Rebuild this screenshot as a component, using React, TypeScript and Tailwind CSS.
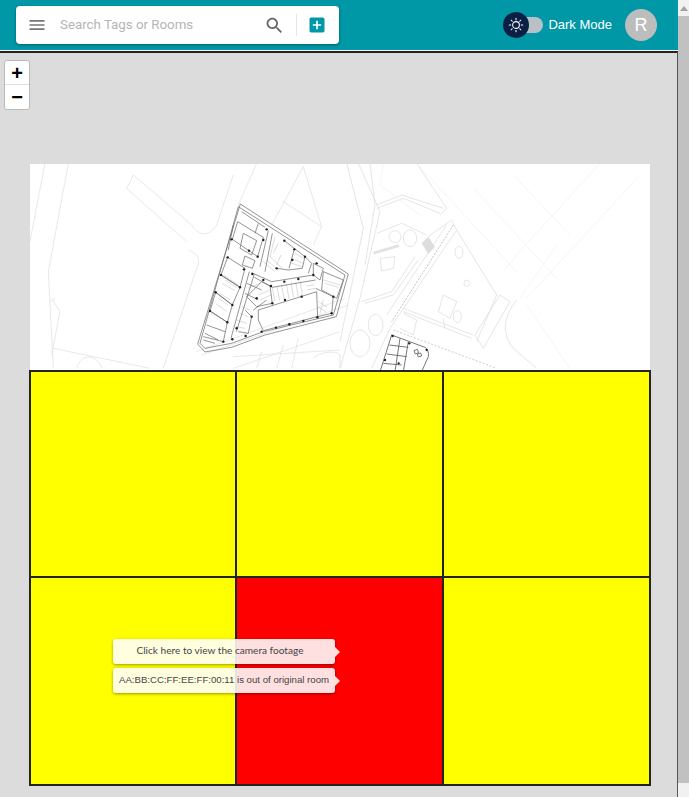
// wall lines of the main building (coordinates: 3x crop, offset 195,200)
const buildingWalls = [
  "M130 20 L450 225 L415 345 L205 395 L110 430 L30 445 L15 430 L130 20 Z",
  "M136 12 L460 222 L424 350 L210 405 L110 442 L30 456 L8 432 Z",
  "M163 215 L108 415 M178 222 L124 395",
  "M170 218 L230 245 L355 225 M178 232 L232 262 L362 240",
  "M190 330 L365 275 L368 350 L205 392 L190 360 Z",
  "M220 92 L195 200 M232 100 L210 215",
  "M128 65 L205 112 L188 170 L112 118 Z",
  "M98 172 L150 205 L135 262 L78 225 Z",
  "M145 100 L185 122 L170 165 L135 145 Z",
  "M150 168 L180 182 L172 205 L142 195 Z",
  "M115 75 L100 150 M140 35 L210 82 M190 70 L180 100",
  "M62 277 L112 315 L97 367 L45 333 Z",
  "M78 225 L135 262 L112 315 L62 277",
  "M45 333 L97 367 L85 425 L25 410",
  "M35 375 L90 395 M25 420 L60 430 M30 400 L70 420",
  "M355 190 L385 205 L375 240 L355 225 Z",
  "M385 215 L445 240 L425 295 L380 270 Z",
  "M362 265 L415 290 L410 340 L368 350",
  "M268 122 L330 170 L322 205 L280 210 L245 205",
  "M298 148 L282 205 M330 170 L350 190 L340 220",
  "M150 330 L170 350 L160 400 L130 395",
  "M200 245 L225 258 L232 310 L185 320 L155 290 Z",
  "M155 250 L200 270 M150 280 L190 300 M175 330 L215 300",
]

const buildingHatch = [
  "M232 262 L240 305 M246 258 L254 302 M260 255 L268 298 M274 252 L282 296 M288 248 L296 293 M302 246 L310 290 M316 244 L322 286 M336 258 L358 254 M335 270 L360 265",
  "M205 185 L240 215 M215 180 L250 210 M225 170 L262 205 M240 110 L225 170 M250 130 L235 160 M258 165 L245 195",
  "M288 175 L325 190 M285 188 L322 200 M300 160 L330 178",
  "M85 225 L130 255 M90 240 L125 262 M82 250 L120 272 M75 280 L105 300 M70 295 L100 315 M62 310 L95 335",
  "M140 320 L165 330 M135 340 L160 350 M125 360 L155 370 M122 380 L150 385",
  "M370 305 L395 320 M368 320 L392 335 M375 340 L385 300 M390 250 L430 262 M385 240 L435 255",
  "M190 285 L225 270 M195 300 L228 285 M160 265 L195 250",
]

const buildingColumns = [
  [215, 88], [268, 122], [298, 148], [330, 170], [365, 190], [205, 120], [110, 118], [162, 152],
  [98, 172], [188, 170], [147, 208], [172, 222], [205, 240], [268, 245], [310, 237], [355, 225],
  [228, 258], [270, 300], [232, 310], [185, 295], [170, 350], [78, 225], [62, 277], [135, 262],
  [112, 315], [45, 333], [97, 367], [125, 385], [112, 418], [85, 425], [152, 408], [200, 395],
  [243, 383], [283, 373], [325, 363], [367, 352], [410, 340], [415, 290], [320, 290], [292, 180],
  [245, 205],
]

// site lines left of the middle (3x crop, offset 20,155)
const siteLeft = [
  "M75 25 L30 260",
  "M145 25 L85 350 L100 640",
  "M340 60 L320 100 L500 260 M340 60 L515 210",
  "M515 210 C535 245 570 245 590 210 L640 60",
  "M505 285 C540 300 540 320 530 340 L430 640",
  "M95 430 L120 470 L95 600 M105 430 L90 440",
  "M100 580 L390 640",
  "M170 640 C185 590 235 600 245 640",
  "M710 25 L655 150 M850 35 L905 215 L880 270 M850 35 L755 210",
  "M790 140 L905 215",
  "M530 590 L975 430 M545 600 L985 450 M640 640 L960 530 M640 605 L960 585",
  "M710 640 L725 590 M770 640 L790 570 M815 640 L835 550",
  "M880 610 C900 590 950 585 960 600 L960 640",
]

// site lines right of the middle (3x crop, offset 340,155)
const siteRight = [
  "M20 25 L70 220 L0 560",
  "M55 25 L120 170 L60 430 L0 640",
  "M90 25 L105 150 L75 330",
  "M110 150 L185 120 L310 160 M110 160 L190 130 L300 175",
  "M110 235 L185 205 L260 240",
  "M100 295 L175 270",
  "M65 440 L155 410 L225 305 M75 445 L160 420 L235 315",
  "M335 195 L350 225 L150 520 L95 640 M320 210 L140 480",
  "M265 245 L335 195 M300 180 L320 160 L230 25",
  "M350 225 L470 420 L410 560",
  "M190 460 L400 540 M190 470 L395 550",
  "M480 420 L510 440 L430 580 L405 540 Z",
  "M530 435 C495 480 480 530 520 580 L590 640",
  "M120 310 L165 305 L160 340 L125 348 Z",
  "M310 420 L350 440 L330 490 L295 470 Z",
  "M310 490 L315 520",
  "M190 475 L230 495 L220 540 L180 520",
  "M147 245 a18 18 0 1 0 36 0 a18 18 0 1 0 -36 0",
  "M190 250 a20 25 0 1 0 40 0 a20 25 0 1 0 -40 0",
  "M345 292 a12 18 0 1 0 24 0 a12 18 0 1 0 -24 0",
  "M372 385 a8 10 0 1 0 16 0 a8 10 0 1 0 -16 0",
  "M340 485 a12 18 0 1 0 24 0 a12 18 0 1 0 -24 0",
  "M85 510 a22 32 0 1 0 44 0 a22 32 0 1 0 -44 0",
  "M30 565 a30 40 0 1 0 60 0 a30 40 0 1 0 -60 0",
]

const siteFaint = [
  "M230 25 L530 350 M400 100 L650 370 M520 60 L690 240",
  "M780 25 L530 300 L490 350 M900 60 L560 430 M650 270 L540 430",
  "M560 450 L690 640 M130 25 L120 90 L240 180",
]

// small block at the bottom edge (3x crop, offset 340,320)
const smallBlock = [
  "M155 45 L255 82 Q268 90 265 110 L245 155 M155 45 L120 155",
  "M180 55 L165 155 M205 65 L190 155 M148 75 L205 82 M140 102 L200 110 M130 130 L185 135",
  "M222 92 l10 -4 l4 10 l-10 4 Z M232 102 l10 -3 l3 9 l-10 3 Z",
]

function Tip({ children, font }: { children: string; font: string }) {
  return (
    <div className={`relative flex h-[25px] w-[222px] items-center justify-center whitespace-nowrap rounded-[3px] bg-white/[0.88] text-[#444] shadow-[0_1px_3px_rgba(0,0,0,0.4)] ${font}`}>
      {children}
      <span className="absolute right-[-5px] top-1/2 -mt-[5px] border-y-[5px] border-l-[5px] border-y-transparent border-l-white/[0.88]" />
    </div>
  )
}

export default function App() {
  return (
    <div className="flex h-[797px] w-[689px] overflow-hidden bg-white font-['Roboto',sans-serif]">
      <div className="w-[678px] shrink-0">
        {/* Top bar */}
        <header className="flex h-[50px] w-[689px] items-center bg-[#0097a7] pl-4 pr-[32px]">
          <div className="flex h-[38px] w-[323px] items-center rounded bg-white pl-[11px] pr-[12px] shadow-[0_1px_3px_rgba(0,0,0,0.4)]">
            <svg viewBox="0 0 24 24" className="h-[20px] w-[20px] fill-[#757575]">
              <path d="M3 18h18v-2H3v2zm0-5h18v-2H3v2zm0-7v2h18V6H3z" />
            </svg>
            <span className="ml-[13px] flex-1 text-[13.3px] text-[#b5b5b5]">Search Tags or Rooms</span>
            <svg viewBox="0 0 24 24" className="h-[21px] w-[21px] fill-[#666]">
              <path d="M15.5 14h-.79l-.28-.27C15.41 12.59 16 11.11 16 9.5 16 5.91 13.09 3 9.5 3S3 5.91 3 9.5 5.91 16 9.5 16c1.61 0 3.09-.59 4.23-1.57l.27.28v.79l5 4.99L20.49 19l-4.99-5zm-6 0C7.01 14 5 11.99 5 9.5S7.01 5 9.5 5 14 7.01 14 9.5 11.99 14 9.5 14z" />
            </svg>
            <span className="ml-[11px] mr-[10px] h-[22px] w-px bg-[#e6e6e6]" />
            <svg viewBox="0 0 24 24" className="h-[20px] w-[20px] fill-[#0097a7]">
              <path d="M19 3H5c-1.1 0-2 .9-2 2v14c0 1.1.9 2 2 2h14c1.1 0 2-.9 2-2V5c0-1.1-.9-2-2-2zm-2 10h-4v4h-2v-4H7v-2h4V7h2v4h4v2z" />
            </svg>
          </div>
          <div className="ml-auto flex items-center">
            <div className="z-10 flex h-[26px] w-[26px] items-center justify-center rounded-full bg-[#0a1f44] text-white">
              <svg viewBox="0 0 24 24" className="h-[18px] w-[18px]" fill="none" stroke="currentColor" strokeWidth="1.4" strokeLinecap="round">
                <circle cx="12" cy="12" r="4.5" />
                <path d="M12 3v2M12 19v2M3 12h2M19 12h2M5.6 5.6L7 7M17 17l1.4 1.4M5.6 18.4L7 17M17 7l1.4-1.4" />
              </svg>
            </div>
            <div className="-ml-[12px] h-[16px] w-[26px] rounded-full bg-[#b9c0c8]" />
            <span className="ml-[5px] font-['Liberation_Sans',sans-serif] text-[13px] text-white">Dark Mode</span>
            <div className="ml-[13px] flex h-8 w-8 items-center justify-center rounded-full bg-[#bdbdbd] font-['Liberation_Sans',sans-serif] text-[18px] text-white">R</div>
          </div>
        </header>

        {/* Map */}
        <main className="relative mt-[1px] h-[746px] overflow-hidden border-y-2 border-r border-b-0 border-y-[#222] border-r-[#555] bg-[#dcdcdc] pl-[29px] pt-[111px]">
          <div className="absolute left-[4px] top-[7px] flex w-[26px] flex-col overflow-hidden rounded-[3px] border border-[#bbb] bg-white font-['Liberation_Sans',sans-serif] text-[20px] font-bold leading-[24px] text-black">
            <span className="h-6 border-b border-[#ddd] text-center">+</span>
            <span className="h-6 text-center">−</span>
          </div>

          <svg viewBox="30 164 620 206" className="ml-px block h-[206px] w-[620px] bg-white blur-[0.4px]" fill="none">
            <g transform="translate(20 155) scale(0.3333)" stroke="#dcdcdc" strokeWidth="2">
              {siteLeft.map((d, i) => <path key={i} d={d} />)}
            </g>
            <g transform="translate(340 155) scale(0.3333)" stroke="#d8d8d8" strokeWidth="2">
              {siteRight.map((d, i) => <path key={i} d={d} />)}
              <path d="M245 265 L265 245 L285 275 L265 297 Z" fill="#dddddd" stroke="none" />
              <path d="M100 290 L175 268 L178 276 L103 298 Z" fill="#e2e2e2" stroke="none" />
              <path d="M160 525 L470 640" stroke="#aaa" strokeWidth="1.8" strokeDasharray="6 5" />
              <path d="M340 210 L155 500" stroke="#999" strokeWidth="1.8" strokeDasharray="6 4" />
            </g>
            <g transform="translate(340 155) scale(0.3333)" stroke="#f0f0f0" strokeWidth="2">
              {siteFaint.map((d, i) => <path key={i} d={d} />)}
            </g>
            <g transform="translate(195 200) scale(0.3333)">
              <g stroke="#bdbdbd" strokeWidth="1.6">
                {buildingHatch.map((d, i) => <path key={i} d={d} />)}
              </g>
              <g stroke="#6e6e6e" strokeWidth="2.2">
                {buildingWalls.map((d, i) => <path key={i} d={d} />)}
              </g>
              <g fill="#1e1e1e">
                {buildingColumns.map(([x, y], i) => <circle key={i} cx={x} cy={y} r="3.6" />)}
              </g>
            </g>
            <g transform="translate(340 320) scale(0.3333)" stroke="#555" strokeWidth="2.4">
              {smallBlock.map((d, i) => <path key={i} d={d} />)}
              <g fill="#222" stroke="none">
                <circle cx="158" cy="48" r="3.5" />
                <circle cx="208" cy="70" r="3.5" />
                <circle cx="260" cy="90" r="3.5" />
                <circle cx="135" cy="120" r="3.5" />
                <circle cx="176" cy="130" r="3.5" />
              </g>
            </g>
          </svg>

          <div className="grid h-[416px] w-[622px] grid-cols-[206px_207px_1fr] grid-rows-[206px_1fr] border-2 border-[#222] bg-[#ffff00]">
            <div className="border-b-2 border-r-2 border-[#222]" />
            <div className="border-b-2 border-r-2 border-[#222]" />
            <div className="border-b-2 border-[#222]" />
            <div className="border-r-2 border-[#222]" />
            <div className="border-r-2 border-[#222] bg-[#ff0000]" />
            <div />
          </div>

          <div className="absolute left-[113px] top-[586px] flex flex-col gap-[4px]">
            <Tip font="font-['Lato',sans-serif] text-[10.1px] pr-2 pb-px">Click here to view the camera footage</Tip>
            <Tip font="font-['Liberation_Sans',sans-serif] text-[9.65px]">AA:BB:CC:FF:EE:FF:00:11 is out of original room</Tip>
          </div>
        </main>
      </div>

      {/* Scrollbar */}
      <div className="flex w-[11px] shrink-0 flex-col bg-[#f1f1f1]">
        <span className="mx-auto mt-[6px] h-0 w-0 border-x-[4px] border-b-[5px] border-x-transparent border-b-[#a3a3a3]" />
        <div className="mt-[5px] h-[767px] bg-[#c1c1c1]" />
      </div>
    </div>
  )
}
